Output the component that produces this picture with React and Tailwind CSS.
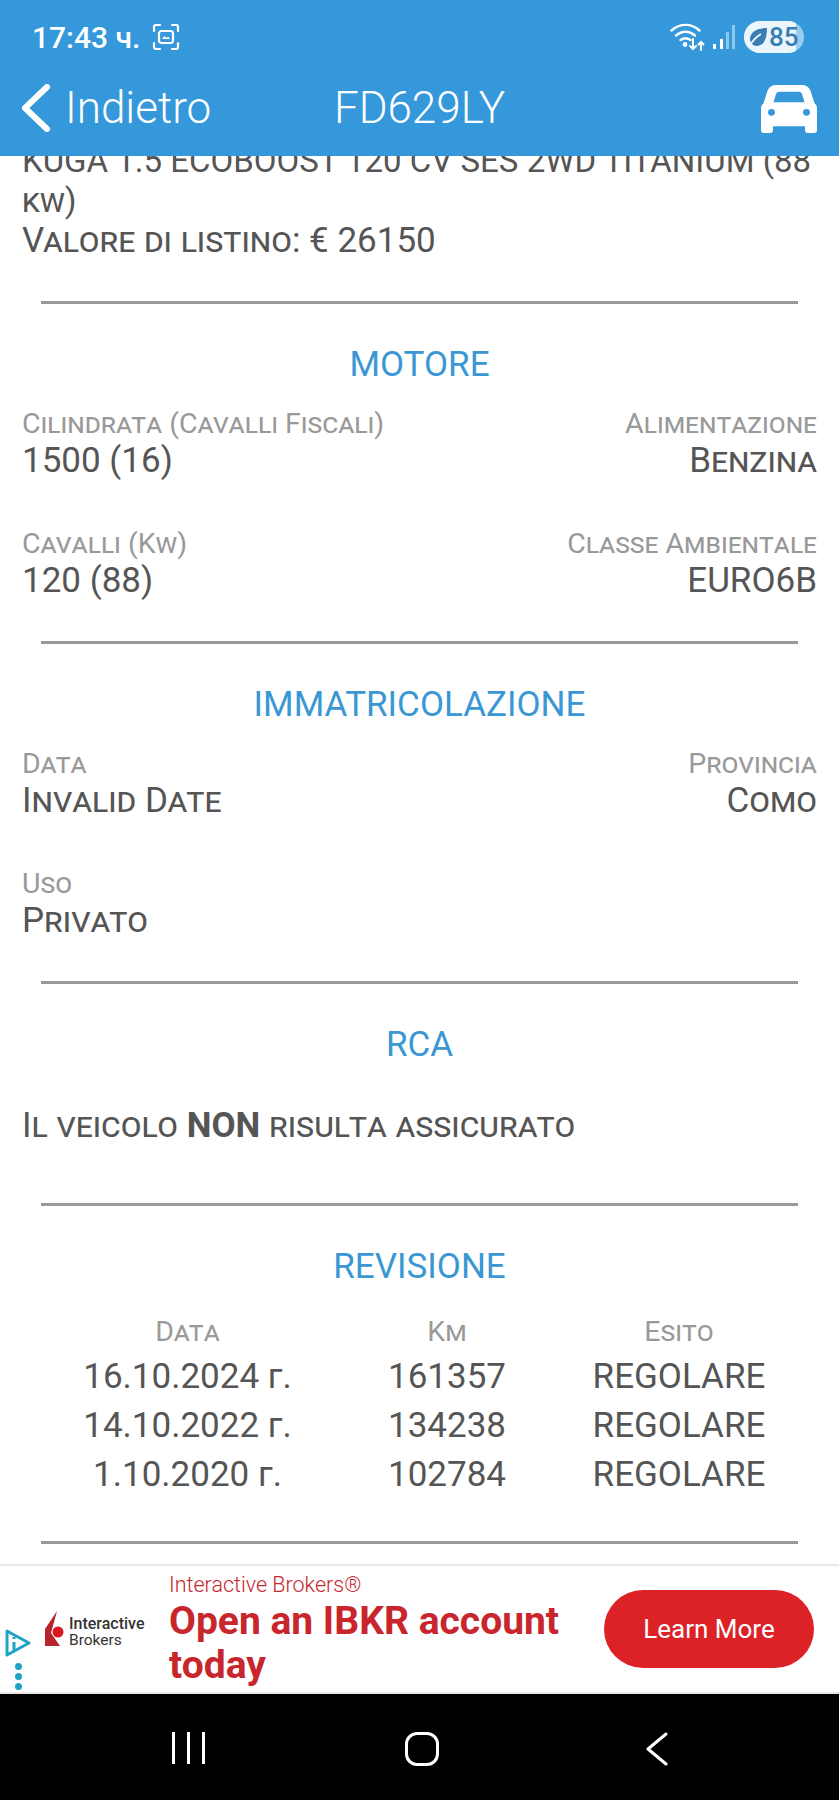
function Divider() {
  return <div className="mx-[19px] h-[3px] bg-[#999999]" />
}

function Heading({ children }) {
  return <h2 className="mt-[39px] h-[44px] text-center text-[35px] leading-[44px] text-[#3b97d3]">{children}</h2>
}

function Field({ label, value, right }) {
  return (
    <div className={right ? 'text-right' : ''}>
      <div className="text-[28.5px] leading-[38px] text-[#999999] [font-variant:small-caps]">{label}</div>
      <div className="text-[35px] leading-[36px] text-[#555555] [font-variant:small-caps]">{value}</div>
    </div>
  )
}

function StatusBar() {
  return (
    <div className="flex h-[74px] items-center justify-between pl-[32px] pr-[35px] text-white">
      <div className="flex items-center gap-[12px]">
        <span className="text-[30px] font-medium">17:43 ч.</span>
        <svg width="28" height="28" viewBox="0 0 28 28" fill="none" stroke="white" strokeWidth="2.2" strokeLinecap="round">
          <path d="M2 8V4a2 2 0 0 1 2-2h4M20 2h4a2 2 0 0 1 2 2v4M26 20v4a2 2 0 0 1-2 2h-4M8 26H4a2 2 0 0 1-2-2v-4" />
          <rect x="7" y="8" width="14" height="12" rx="2.5" />
          <path d="M10 16l2.5-3 2 2 1.5-1.5 2 2.5z" fill="white" stroke="none" />
        </svg>
      </div>
      <div className="flex items-center gap-[6px]">
        <svg width="36" height="30" viewBox="0 0 36 30" fill="none" stroke="white" strokeWidth="2.4" strokeLinecap="round">
          <path d="M1.5 8.500C10 1 21 1 29.500 8.500" />
          <path d="M6 13.500c6-5 13-5 19 0" />
          <path d="M10.500 18c3.500-2.500 6.500-2.500 10 0" />
          <circle cx="15" cy="22.500" r="1.200" fill="white" />
          <path d="M23 17v10m-3-3l3 3 3-3M31 28V20m-2.500 2.500L31 20l2.500 2.500" strokeWidth="2" />
        </svg>
        <svg width="24" height="26" viewBox="0 0 24 26">
          <rect x="1" y="20" width="3" height="5" fill="white" />
          <rect x="8" y="15" width="3" height="10" fill="white" />
          <rect x="14" y="8" width="3" height="17" fill="white" fillOpacity="0.45" />
          <rect x="20" y="1" width="3" height="24" fill="white" fillOpacity="0.45" />
        </svg>
        <div className="relative ml-[2px] flex h-[32px] w-[60px] items-center overflow-hidden rounded-full bg-white/50">
          <div className="absolute inset-y-0 left-0 w-[52px] bg-[#eaf5fc]" />
          <svg className="relative ml-[3px]" width="22" height="22" viewBox="0 0 22 22" fill="none">
            <path d="M20 2C10 2 3 6 3 13c0 4 3 7 7 7 7 0 10-8 10-18z" fill="#3a7db3" />
            <path d="M2 21c3-6 7-10 12-13" stroke="#eaf5fc" strokeWidth="2" />
          </svg>
          <span className="relative text-[26px] leading-none font-medium text-[#3a7db3]">85</span>
        </div>
      </div>
    </div>
  )
}

function TopBar() {
  return (
    <div className="grid h-[82px] grid-cols-[1fr_auto_1fr] items-center pb-[15px] text-white">
      <div className="flex items-center pl-[21px]">
        <svg width="30" height="48" viewBox="0 0 30 48" fill="none" stroke="white" strokeWidth="6" strokeLinecap="round" strokeLinejoin="round">
          <path d="M26 3L4 24l22 21" />
        </svg>
        <span className="ml-[14px] text-[44px] leading-none font-light">Indietro</span>
      </div>
      <div className="text-[44px] leading-none font-light">FD629LY</div>
      <div className="flex justify-end pr-[22px]">
        <svg className="mt-[2px]" width="56" height="48" viewBox="0 0 56 50" preserveAspectRatio="none" fill="white">
          <path fillRule="evenodd" d="M15 0h26c4 0 7 2 8.500 6l4 13c1.500 1 2.500 3 2.500 5v23a3 3 0 0 1-3 3h-6a3 3 0 0 1-3-3v-4H12v4a3 3 0 0 1-3 3H3a3 3 0 0 1-3-3V24c0-2 1-4 2.500-5l4-13C8 2 11 0 15 0zM18 7c-1.500 0-2.500 1-3 2.500L12.500 18h31L41 9.500C40.500 8 39.500 7 38 7zM10.500 25a3.500 3.500 0 1 0 0 7 3.500 3.500 0 0 0 0-7zm35 0a3.500 3.500 0 1 0 0 7 3.500 3.500 0 0 0 0-7z" />
        </svg>
      </div>
    </div>
  )
}

const revisions = [
  ['16.10.2024 г.', '161357', 'REGOLARE'],
  ['14.10.2022 г.', '134238', 'REGOLARE'],
  ['1.10.2020 г.', '102784', 'REGOLARE'],
]

function Content() {
  return (
    <main className="flex-1 overflow-hidden bg-white">
      <div className="-mt-[15px] px-[22px]">
        <div className="text-[#555555] [font-variant:small-caps]">
          <div className="text-[33px] leading-[40px]">KUGA 1.5 ECOBOOST 120 CV SES 2WD TITANIUM (88 kw)</div>
          <div className="text-[35px] leading-[40px]">Valore di listino: € 26150</div>
        </div>
        <div className="mt-[40px]"><Divider /></div>

        <Heading>MOTORE</Heading>
        <div className="mt-[18px] flex flex-col gap-[46px]">
          <div className="flex justify-between">
            <Field label="Cilindrata (Cavalli Fiscali)" value="1500 (16)" />
            <Field right label="Alimentazione" value="Benzina" />
          </div>
          <div className="flex justify-between">
            <Field label="Cavalli (Kw)" value="120 (88)" />
            <Field right label="Classe Ambientale" value="EURO6B" />
          </div>
        </div>
        <div className="mt-[42px]"><Divider /></div>

        <Heading>IMMATRICOLAZIONE</Heading>
        <div className="mt-[18px] flex flex-col gap-[46px]">
          <div className="flex justify-between">
            <Field label="Data" value="Invalid Date" />
            <Field right label="Provincia" value="Como" />
          </div>
          <Field label="Uso" value="Privato" />
        </div>
        <div className="mt-[42px]"><Divider /></div>

        <Heading>RCA</Heading>
        <p className="mt-[37px] text-[35px] leading-[44px] text-[#555555] [font-variant:small-caps]">
          Il veicolo <b className="font-bold">NON</b> risulta assicurato
        </p>
        <div className="mt-[55px]"><Divider /></div>

        <Heading>REVISIONE</Heading>
        <div className="mt-[24px] grid grid-cols-[331px_188px_276px] text-center">
          {['Data', 'Km', 'Esito'].map((h) => (
            <div key={h} className="mb-[1px] h-[38px] text-[28.5px] leading-[38px] text-[#999999] [font-variant:small-caps]">{h}</div>
          ))}
          {revisions.flat().map((cell, i) => (
            <div key={i} className="h-[49px] text-[35px] leading-[49px] text-[#555555]">{cell}</div>
          ))}
        </div>
        <div className="mt-[42px]"><Divider /></div>
      </div>
    </main>
  )
}

function AdBanner() {
  return (
    <div className="flex h-[130px] items-center border-y-2 border-[#e8e8e8] bg-white">
      <div className="flex w-[36px] shrink-0 flex-col items-center self-end pb-[2px]">
        <svg width="28" height="28" viewBox="0 0 28 28" fill="none" stroke="#1fa3c4" strokeWidth="3" strokeLinejoin="round">
          <path d="M3 2l22 12L3 26z" />
          <path d="M10 13v8M10 8v2" />
        </svg>
        <div className="mt-[6px] flex flex-col gap-[3px]">
          <span className="block h-[7px] w-[7px] rounded-full bg-[#1fa3c4]" />
          <span className="block h-[7px] w-[7px] rounded-full bg-[#1fa3c4]" />
          <span className="block h-[7px] w-[7px] rounded-full bg-[#1fa3c4]" />
        </div>
      </div>
      <div className="flex w-[133px] shrink-0 items-center pl-[8px]">
        <svg width="20" height="36" viewBox="0 0 20 36">
          <path d="M13 0L1 18v17h15L7 22z" fill="#b8232c" />
          <circle cx="14" cy="21" r="5.500" fill="#d71920" />
        </svg>
        <div className="ml-[5px] mt-[6px] text-[#333333]">
          <div className="text-[16px] leading-[16px] font-medium">Interactive</div>
          <div className="text-[15.500px] leading-[16px]">Brokers</div>
        </div>
      </div>
      <div className="w-[435px] shrink-0 self-start pt-[5px] text-[#c8252d]">
        <div className="text-[21.500px] leading-[28px] font-light">Interactive Brokers®</div>
        <div className="text-[39px] leading-[44px] font-bold">Open an IBKR account today</div>
      </div>
      <div className="flex h-[78px] w-[210px] shrink-0 items-center justify-center rounded-[39px] bg-[#dc2127] text-[26px] text-white">
        Learn More
      </div>
    </div>
  )
}

function NavBar() {
  return (
    <div className="flex h-[106px] items-start bg-black pt-[38px]">
      <div className="ml-[172px] flex h-[32px] gap-[12px]">
        <span className="w-[3px] bg-white" />
        <span className="w-[3px] bg-white" />
        <span className="w-[3px] bg-white" />
      </div>
      <div className="ml-[200px] h-[34px] w-[34px] rounded-[12px] border-[3px] border-white" />
      <svg className="ml-[206px]" width="24" height="34" viewBox="0 0 24 34" fill="none" stroke="white" strokeWidth="3" strokeLinecap="round" strokeLinejoin="round">
        <path d="M21 2L3 17l18 15" />
      </svg>
    </div>
  )
}

export default function App() {
  return (
    <div className="flex h-[1800px] w-[839px] flex-col overflow-hidden bg-white font-['Roboto',sans-serif]">
      <header className="z-10 h-[156px] bg-[#3498db]">
        <StatusBar />
        <TopBar />
      </header>
      <Content />
      <AdBanner />
      <NavBar />
    </div>
  )
}
